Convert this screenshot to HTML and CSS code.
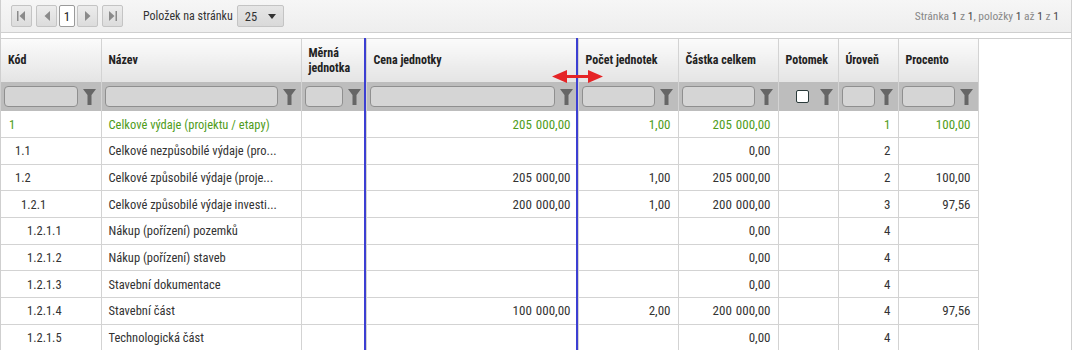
FILE: index.html
```html
<!DOCTYPE html>
<html lang="cs">
<head>
  <meta charset="UTF-8" />
  <title>Rozpočet</title>
  <link rel="stylesheet" href="styles.css">
</head>
<body>
  <div class="grid">
    <div class="pager">
      <span class="pg-btn"><svg width="9" height="10" viewBox="0 0 9 10"><rect x="0" y="0" width="1.5" height="10"/><path d="M8 0V10L2.5 5Z"/></svg></span>
      <span class="pg-btn"><svg width="6" height="10" viewBox="0 0 6 10"><path d="M6 0V10L0.5 5Z"/></svg></span>
      <span class="pg-num">1</span>
      <span class="pg-btn"><svg width="6" height="10" viewBox="0 0 6 10"><path d="M0 0V10L5.5 5Z"/></svg></span>
      <span class="pg-btn"><svg width="9" height="10" viewBox="0 0 9 10"><path d="M1 0V10L6.5 5Z"/><rect x="7.5" y="0" width="1.5" height="10"/></svg></span>
      <span class="pg-label">Položek na stránku</span>
      <span class="pg-select">25 <svg width="8" height="5" viewBox="0 0 8 5"><path d="M0 0H8L4 5Z"/></svg></span>
      <span class="pg-info">Stránka <b>1</b> z <b>1</b>, položky <b>1</b> až <b>1</b> z <b>1</b></span>
    </div>
    <div class="spacer"></div>
    <div class="table-wrap">
      <table>
        <colgroup>
          <col style="width:100px"><col style="width:200px"><col style="width:65px"><col style="width:212px"><col style="width:100px"><col style="width:100px"><col style="width:60px"><col style="width:60px"><col style="width:80px">
        </colgroup>
        <thead>
          <tr class="head">
            <th>Kód</th><th>Název</th><th>Měrná jednotka</th><th>Cena jednotky</th><th>Počet jednotek</th><th>Částka celkem</th><th>Potomek</th><th>Úroveň</th><th>Procento</th>
          </tr>
          <tr class="filters">
            <td><div class="flt"><span class="inp"></span><svg class="funnel" viewBox="0 0 13 16"><path d="M0 0H13L8.5 6V16H4.5V6Z"/></svg></div></td>
            <td><div class="flt"><span class="inp"></span><svg class="funnel" viewBox="0 0 13 16"><path d="M0 0H13L8.5 6V16H4.5V6Z"/></svg></div></td>
            <td><div class="flt"><span class="inp"></span><svg class="funnel" viewBox="0 0 13 16"><path d="M0 0H13L8.5 6V16H4.5V6Z"/></svg></div></td>
            <td><div class="flt"><span class="inp"></span><svg class="funnel" viewBox="0 0 13 16"><path d="M0 0H13L8.5 6V16H4.5V6Z"/></svg></div></td>
            <td><div class="flt"><span class="inp"></span><svg class="funnel" viewBox="0 0 13 16"><path d="M0 0H13L8.5 6V16H4.5V6Z"/></svg></div></td>
            <td><div class="flt"><span class="inp"></span><svg class="funnel" viewBox="0 0 13 16"><path d="M0 0H13L8.5 6V16H4.5V6Z"/></svg></div></td>
            <td><div class="flt flt-check"><span class="chk"></span><svg class="funnel" viewBox="0 0 13 16"><path d="M0 0H13L8.5 6V16H4.5V6Z"/></svg></div></td>
            <td><div class="flt"><span class="inp"></span><svg class="funnel" viewBox="0 0 13 16"><path d="M0 0H13L8.5 6V16H4.5V6Z"/></svg></div></td>
            <td><div class="flt"><span class="inp"></span><svg class="funnel" viewBox="0 0 13 16"><path d="M0 0H13L8.5 6V16H4.5V6Z"/></svg></div></td>
          </tr>
        </thead>
        <tbody>
          <tr class="total">
            <td class="lvl1">1</td><td>Celkové výdaje (projektu / etapy)</td><td></td><td class="num">205 000,00</td><td class="num">1,00</td><td class="num">205 000,00</td><td></td><td class="num">1</td><td class="num">100,00</td>
          </tr>
          <tr>
            <td class="lvl2">1.1</td><td>Celkové nezpůsobilé výdaje (pro...</td><td></td><td></td><td></td><td class="num">0,00</td><td></td><td class="num">2</td><td></td>
          </tr>
          <tr>
            <td class="lvl2">1.2</td><td>Celkové způsobilé výdaje (proje...</td><td></td><td class="num">205 000,00</td><td class="num">1,00</td><td class="num">205 000,00</td><td></td><td class="num">2</td><td class="num">100,00</td>
          </tr>
          <tr>
            <td class="lvl3">1.2.1</td><td>Celkové způsobilé výdaje investi...</td><td></td><td class="num">200 000,00</td><td class="num">1,00</td><td class="num">200 000,00</td><td></td><td class="num">3</td><td class="num">97,56</td>
          </tr>
          <tr>
            <td class="lvl4">1.2.1.1</td><td>Nákup (pořízení) pozemků</td><td></td><td></td><td></td><td class="num">0,00</td><td></td><td class="num">4</td><td></td>
          </tr>
          <tr>
            <td class="lvl4">1.2.1.2</td><td>Nákup (pořízení) staveb</td><td></td><td></td><td></td><td class="num">0,00</td><td></td><td class="num">4</td><td></td>
          </tr>
          <tr>
            <td class="lvl4">1.2.1.3</td><td>Stavební dokumentace</td><td></td><td></td><td></td><td class="num">0,00</td><td></td><td class="num">4</td><td></td>
          </tr>
          <tr>
            <td class="lvl4">1.2.1.4</td><td>Stavební část</td><td></td><td class="num">100 000,00</td><td class="num">2,00</td><td class="num">200 000,00</td><td></td><td class="num">4</td><td class="num">97,56</td>
          </tr>
          <tr>
            <td class="lvl4">1.2.1.5</td><td>Technologická část</td><td></td><td></td><td></td><td class="num">0,00</td><td></td><td class="num">4</td><td></td>
          </tr>
        </tbody>
      </table>

      <!-- indikator presunu sloupce -->
      <div class="drop-line drop-a"></div>
      <div class="drop-line drop-b"></div>
      <svg class="drag-arrow" width="51" height="13" viewBox="0 0 51 13"><path d="M0 6.5L15 0V5H36V0L51 6.5L36 13V8H15V13Z"/></svg>
    </div>
  </div>
</body>
</html>
```

FILE: styles.css
```css
* {
  box-sizing: border-box;
}

body {
  margin: 0;
  font-family: "Roboto Condensed", "Roboto", sans-serif;
  font-size: 12.5px;
  color: #333;
  background: #fff;
  overflow: hidden;
}

/* Obal gridu */
.grid {
  width: 1072px;
  height: 350px;
  border-left: 1px solid #cfcfcf;
  border-right: 1px solid #cfcfcf;
  overflow: hidden;
}

/* Strankovani */
.pager {
  height: 33px;
  display: flex;
  align-items: center;
  padding: 0 10px;
  background: linear-gradient(#f6f6f6, #eeeeee);
  border-bottom: 1px solid #cfcfcf;
}

.pg-btn {
  width: 21px;
  height: 22px;
  display: flex;
  align-items: center;
  justify-content: center;
  margin-right: 4px;
  border: 1px solid #c4c4c4;
  border-radius: 2px;
  background: linear-gradient(#ececec, #dcdcdc);
}

.pg-btn svg {
  fill: #8a8a8a;
}

.pg-num {
  width: 16px;
  height: 22px;
  margin: 0 2px 0 -2px;
  display: flex;
  align-items: center;
  justify-content: center;
  border: 1px solid #9a9a9a;
  border-radius: 2px;
  background: #fff;
  color: #222;
  font-size: 13px;
}

.pg-label {
  margin-left: 16px;
  font-size: 12px;
  color: #333;
}

.pg-select {
  margin-left: 4px;
  width: 47px;
  height: 22px;
  padding: 0 7px;
  display: flex;
  align-items: center;
  justify-content: space-between;
  font-size: 12.5px;
  color: #333;
  border: 1px solid #c4c4c4;
  border-radius: 2px;
  background: linear-gradient(#e6e6e6, #d9d9d9);
}

.pg-select svg {
  fill: #333;
}

.pg-info {
  margin-left: auto;
  padding-right: 2px;
  color: #888;
  font-size: 11.5px;
}

.pg-info b {
  color: #444;
  font-weight: normal;
}

.spacer {
  height: 5px;
}

/* Tabulka */
.table-wrap {
  position: relative;
  height: 312px;
  border-top: 1px solid #cfcfcf;
}

table {
  width: 977px;
  table-layout: fixed;
  border-collapse: collapse;
}

th, td {
  padding: 0 7px;
  border-right: 1px solid #d3d3d3;
  white-space: nowrap;
  overflow: hidden;
}

.head th {
  height: 43px;
  text-align: left;
  font-size: 12px;
  font-weight: bold;
  color: #222;
  white-space: normal;
  line-height: 15px;
  background: linear-gradient(#fbfbfb, #e4e4e4);
}

.filters td {
  height: 29px;
  padding: 0 0 0 3px;
  background: #bdbdbd;
}

.flt {
  display: flex;
  align-items: center;
  gap: 5px;
}

.inp {
  flex: 1;
  height: 21px;
  border: 1px solid #8f8f8f;
  border-radius: 4px;
  background: #d5d5d5;
}

.funnel {
  width: 13px;
  height: 16px;
  margin-right: 5px;
  fill: #666;
}

.flt-check {
  justify-content: flex-end;
  gap: 11px;
}

.chk {
  width: 13px;
  height: 13px;
  border: 1px solid #2a3a3a;
  border-radius: 2px;
  background: #fff;
}

tbody td {
  height: 26.67px;
  border-bottom: 1px solid #d3d3d3;
}

.num {
  text-align: right;
  font-size: 13px;
  word-spacing: 1px;
}

.total td {
  color: #4f9c1b;
}

.lvl1 { padding-left: 8px; }
.lvl2 { padding-left: 14px; }
.lvl3 { padding-left: 20px; }
.lvl4 { padding-left: 26px; }

/* presun sloupce */
.drop-line {
  position: absolute;
  top: -1px;
  bottom: 0;
  width: 2px;
  background: #3c3fd2;
}

.drop-a {
  left: 363px;
}

.drop-b {
  left: 575px;
}

.drag-arrow {
  position: absolute;
  left: 551px;
  top: 31px;
  fill: #e52426;
}
```
